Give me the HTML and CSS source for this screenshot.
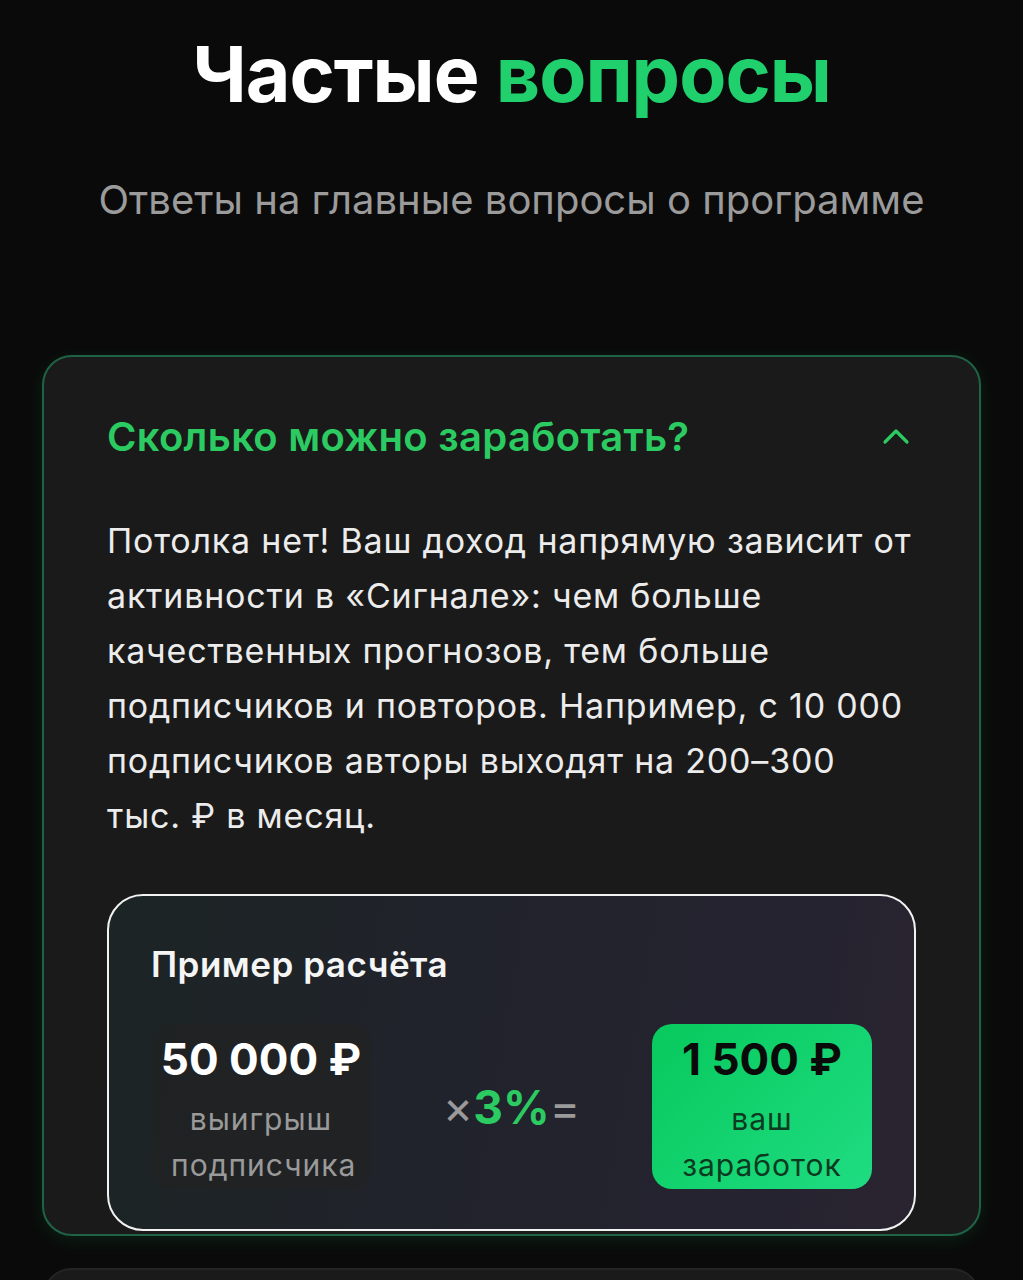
FILE: index.html
```html
<!DOCTYPE html>
<html lang="ru">
<head>
    <meta charset="UTF-8">
    <meta name="viewport" content="width=device-width, initial-scale=1.0">
    <link rel="stylesheet" href="styles.css">
</head>
<body>
    <section class="faq">
        <header class="faq-head">
            <h2 class="faq-title">Частые <span class="accent">вопросы</span></h2>
            <p class="faq-subtitle">Ответы на главные вопросы о программе</p>
        </header>

        <div class="faq-list">
            <div class="faq-item open">
                <div class="faq-question">
                    <span>Сколько можно заработать?</span>
                    <svg class="chevron" width="32" height="32" viewBox="0 0 32 32" fill="none">
                        <path d="M5 21 L16 10 L27 21" stroke="currentColor" stroke-width="3.2" stroke-linecap="round" stroke-linejoin="round"/>
                    </svg>
                </div>
                <p class="faq-answer">
                    Потолка нет! Ваш доход напрямую зависит от активности в «Сигнале»: чем больше качественных прогнозов, тем больше подписчиков и повторов. Например, с 10&nbsp;000 подписчиков авторы выходят на 200–300 тыс. ₽ в месяц.
                </p>

                <div class="calc">
                    <div class="calc-title">Пример расчёта</div>
                    <div class="calc-row">
                        <div class="calc-cell">
                            <div class="calc-sum">50 000 ₽</div>
                            <div class="calc-label">выигрыш подписчика</div>
                        </div>
                        <div class="calc-op">
                            <span class="op">×</span><span class="rate">3%</span><span class="op">=</span>
                        </div>
                        <div class="calc-cell result">
                            <div class="calc-sum">1 500 ₽</div>
                            <div class="calc-label">ваш заработок</div>
                        </div>
                    </div>
                </div>
            </div>

            <div class="faq-item"></div>
        </div>
    </section>
</body>
</html>
```

FILE: styles.css
```css
body {
    margin: 0;
    padding: 0;
    background-color: #0a0a0a;
    font-family: Inter, "Noto Sans", sans-serif;
    color: #ececec;
}

.faq {
    width: 1023px;
    overflow: hidden;
}

.faq-head {
    text-align: center;
    padding-top: 28px;
}

.faq-title {
    margin: 0;
    font-size: 77px;
    line-height: 92px;
    font-weight: 700;
    letter-spacing: -1px;
    color: #fff;
}

.faq-title .accent {
    color: #1fd06c;
}

.faq-subtitle {
    margin: 52px 0 0;
    font-size: 40px;
    line-height: 56px;
    color: #9b9b9b;
    letter-spacing: 0;
}

.faq-list {
    display: flex;
    flex-direction: column;
    gap: 32px;
    padding: 127px 42px 0;
}

.faq-item {
    background-color: #1a1a1a;
    border: 2px solid #242424;
    border-radius: 30px;
    min-height: 60px;
}

.faq-item.open {
    border-color: #1f6346;
    box-shadow: 0 4px 18px rgba(31, 208, 108, 0.12);
    padding: 0 63px 3px;
}

.faq-question {
    display: flex;
    justify-content: space-between;
    align-items: center;
    padding-top: 56px;
    font-size: 40px;
    line-height: 48px;
    font-weight: 600;
    letter-spacing: 0.3px;
    color: #2bcb62;
}

.chevron {
    color: #2bcb62;
    margin-right: 4px;
}

.faq-answer {
    margin: 52px 0 0;
    font-size: 34px;
    line-height: 55px;
    letter-spacing: 0.8px;
    color: #ececec;
}

.calc {
    margin-top: 51px;
    border: 2px solid #f2f2f2;
    border-radius: 36px;
    padding: 48px 42px 40px;
    background: linear-gradient(100deg, #1c2424 0%, #21232c 45%, #252330 80%, #2a2430 100%);
}

.calc-title {
    font-size: 35px;
    line-height: 40px;
    font-weight: 600;
    letter-spacing: 0.5px;
    color: #f5f5f5;
}

.calc-row {
    display: flex;
    justify-content: space-between;
    align-items: center;
    margin-top: 40px;
}

.calc-cell {
    width: 220px;
    height: 165px;
    box-sizing: border-box;
    padding-top: 10px;
    border-radius: 20px;
    background-color: rgba(34, 34, 34, 0.6);
    text-align: center;
}

.calc-sum {
    font-size: 44px;
    line-height: 50px;
    font-weight: 700;
    color: #fff;
}

.calc-label {
    margin-top: 12px;
    font-size: 30px;
    line-height: 46px;
    letter-spacing: 1px;
    color: #9a9a9a;
    padding: 0 20px;
}

.calc-cell.result {
    background: linear-gradient(135deg, #07c95c 0%, #1fdc82 100%);
}

.calc-cell.result .calc-sum {
    color: #0a0a0a;
}

.calc-cell.result .calc-label {
    color: #0b3a20;
}

.calc-op {
    font-size: 46px;
    font-weight: 700;
    line-height: 50px;
}

.calc-op .op {
    color: #9a9a9a;
    font-weight: 400;
}

.calc-op .rate {
    color: #2bcb62;
}
```
